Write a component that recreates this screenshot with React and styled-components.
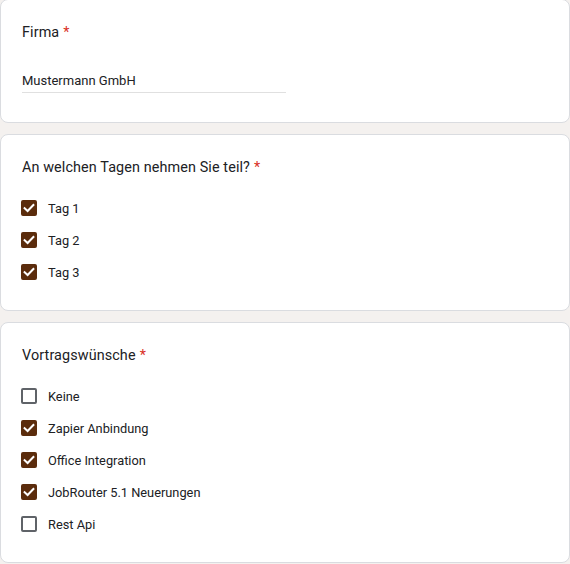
import React from "react";
import styled, { createGlobalStyle } from "styled-components";

const Global = createGlobalStyle`
  html, body { margin: 0; padding: 0; background: #f4f1ef; }
  body { font-family: Roboto, "Noto Sans", Arial, sans-serif; color: #202124; }
`;

const Page = styled.div`
  display: flex;
  flex-direction: column;
  gap: 11px;
  margin-top: -1px;
  width: 570px;
`;

const Card = styled.section`
  background: #fff;
  border: 1px solid #dadce0;
  border-radius: 8px;
  padding: 21px 21px 0;
  box-sizing: border-box;
  height: ${(p) => p.$h}px;
  display: flex;
  flex-direction: column;
`;

const Title = styled.div`
  font-size: 14.4px;
  line-height: 24px;
  letter-spacing: 0.1px;
  color: #202124;
`;

const Star = styled.span`
  color: #d93025;
  margin-left: 4px;
`;

const Input = styled.div`
  margin-top: 24px;
  width: 264px;
  font-size: 13px;
  line-height: 23px;
  border-bottom: 1px solid #e0e0e0;
  color: #202124;
`;

const Options = styled.div`
  margin-top: 12px;
  margin-left: -1px;
  display: flex;
  flex-direction: column;
`;

const Option = styled.label`
  display: flex;
  align-items: center;
  height: 32px;
  gap: 11px;
  font-size: 12.8px;
  color: #202124;
`;

const Box = styled.span`
  width: 16px;
  height: 16px;
  box-sizing: border-box;
  border-radius: 2px;
  border: 2px solid ${(p) => (p.$checked ? "#5b2c0c" : "#5f6368")};
  background: ${(p) => (p.$checked ? "#5b2c0c" : "#fff")};
  display: flex;
  align-items: center;
  justify-content: center;
  flex: none;
`;

const Check = () => (
  <svg width="12" height="12" viewBox="0 0 12 12">
    <path d="M1.6 6.2 L4.6 9 L10.4 3" fill="none" stroke="#fff" strokeWidth="2" strokeLinecap="square" />
  </svg>
);

const CheckOption = ({ checked, children }) => (
  <Option>
    <Box $checked={checked}>{checked && <Check />}</Box>
    <span>{children}</span>
  </Option>
);

export default function App() {
  return (
    <>
      <Global />
      <Page>
        <Card $h={124}>
          <Title>
            Firma<Star>*</Star>
          </Title>
          <Input>Mustermann GmbH</Input>
        </Card>
        <Card $h={177}>
          <Title>
            An welchen Tagen nehmen Sie teil?<Star>*</Star>
          </Title>
          <Options>
            <CheckOption checked>Tag 1</CheckOption>
            <CheckOption checked>Tag 2</CheckOption>
            <CheckOption checked>Tag 3</CheckOption>
          </Options>
        </Card>
        <Card $h={241}>
          <Title>
            Vortragswünsche<Star>*</Star>
          </Title>
          <Options>
            <CheckOption>Keine</CheckOption>
            <CheckOption checked>Zapier Anbindung</CheckOption>
            <CheckOption checked>Office Integration</CheckOption>
            <CheckOption checked>JobRouter 5.1 Neuerungen</CheckOption>
            <CheckOption>Rest Api</CheckOption>
          </Options>
        </Card>
      </Page>
    </>
  );
}
